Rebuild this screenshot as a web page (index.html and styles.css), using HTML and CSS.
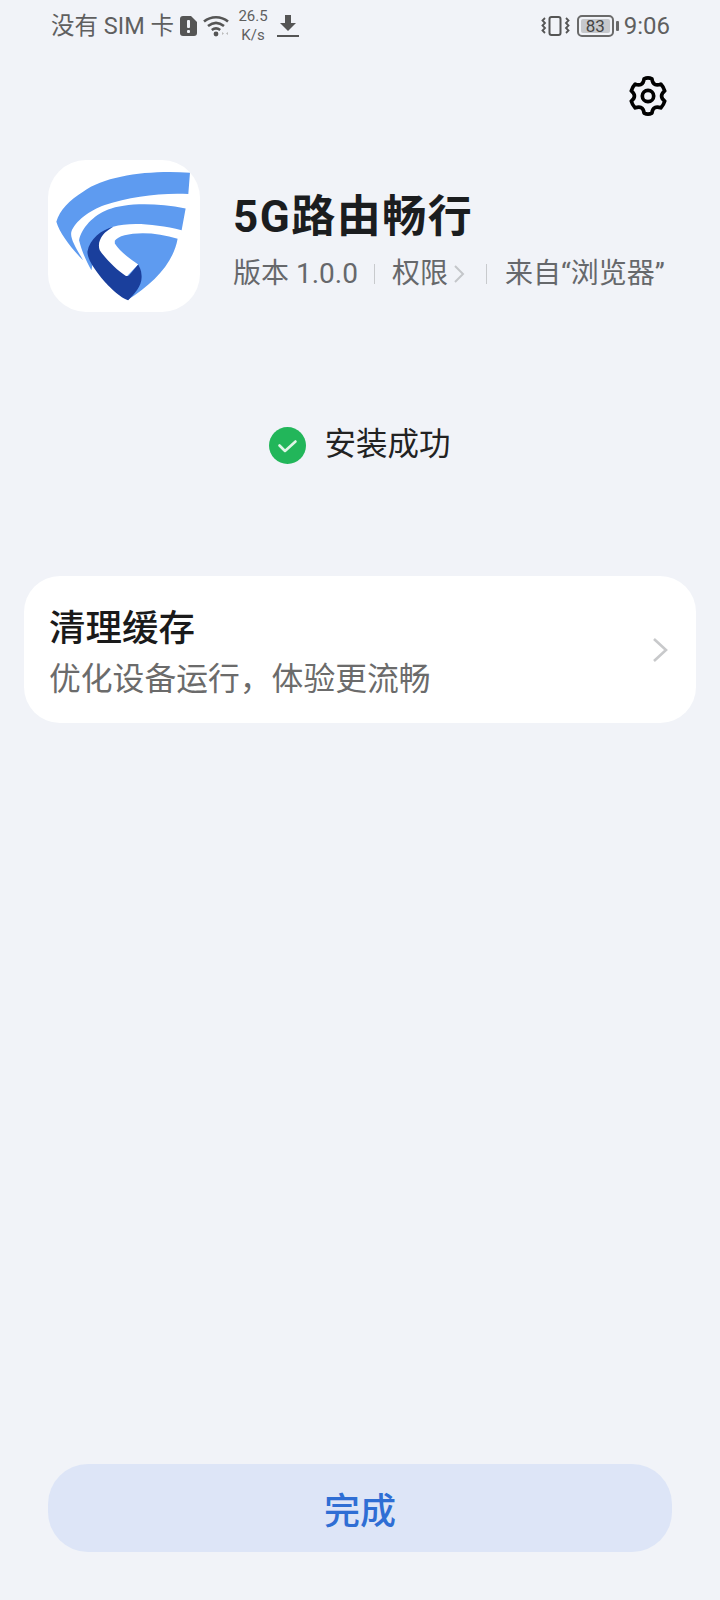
FILE: index.html
```html
<!DOCTYPE html>
<html lang="zh-CN">
<head>
<meta charset="utf-8">
<title>安装成功</title>
<link rel="stylesheet" href="styles.css">
</head>
<body>
<div class="page">
  <div class="status">
    <div class="status-left">
      <span class="carrier">没有 SIM 卡</span>
      <svg class="ic-sim" viewBox="0 0 17 20"><path d="M3 0h8l6 6v11a3 3 0 0 1-3 3H3a3 3 0 0 1-3-3V3a3 3 0 0 1 3-3z" fill="#555"/><rect x="7" y="4" width="3" height="8" rx="1" fill="#f1f3f8"/><rect x="7" y="14" width="3" height="3" rx="1" fill="#f1f3f8"/></svg>
      <svg class="ic-wifi" viewBox="0 0 26 22"><g fill="none" stroke="#555" stroke-width="2.6"><path d="M1 6.5C8 .8 18 .8 25 6.5"/><path d="M5 11C10 7 16 7 21 11"/><path d="M8.8 15c2.600-2 5.800-2 8.400 0"/></g><circle cx="13" cy="19" r="2.400" fill="#555"/><path d="M19 17l2 1.500-2 1.500zM25 17l-2 1.500 2 1.500z" fill="#bbb"/></svg>
      <span class="speed"><span>26.5</span><span>K/s</span></span>
      <svg class="ic-dl" viewBox="0 0 22 22"><path d="M8 0h6v8h5l-8 8-8-8h5z" fill="#555"/><rect y="20" width="22" height="2" fill="#555"/></svg>
    </div>
    <div class="status-right">
      <svg class="ic-vib" viewBox="0 0 29 20"><rect x="8.500" y="1" width="11" height="18" rx="2" fill="none" stroke="#555" stroke-width="2"/><path d="M4 2L1.500 4.500 4 7 1.500 9.500 4 12 1.500 14.500 4 17M25 2l2.500 2.500L25 7l2.500 2.500L25 12l2.500 2.500L25 17" fill="none" stroke="#555" stroke-width="1.800"/></svg>
      <span class="battery"><span class="battery-body"><span class="battery-level">83</span></span><span class="battery-nub"></span></span>
      <span class="time">9:06</span>
    </div>
  </div>

  <div class="toolbar">
    <svg class="ic-gear" viewBox="0 0 48 48"><path d="M19.500 4.500Q24 2.200 28.500 4.500Q29 9.500 31.750 10.600Q34.500 12 38.600 10.400Q42 14 43.100 18.150Q39.500 21 39.500 24Q39.500 27 43.100 29.850Q42 34 38.600 37.600Q34.500 36 31.750 37.400Q29 38.500 28.500 43.500Q24 45.800 19.500 43.500Q19 38.500 16.250 37.400Q13.500 36 9.400 37.600Q6 34 4.900 29.850Q8.500 27 8.500 24Q8.500 21 4.900 18.150Q6 14 9.400 10.400Q13.500 12 16.250 10.600Q19 9.500 19.500 4.500Z" fill="none" stroke="#000" stroke-width="4.200" stroke-linejoin="round"/><circle cx="24" cy="24" r="6.500" fill="none" stroke="#000" stroke-width="4.200"/></svg>
  </div>

  <div class="app">
    <div class="app-icon">
      <svg viewBox="25 30 455 455">
        <path d="M450 68C330 60 200 75 130 125C90 150 60 180 50 215C60 250 95 295 130 330C110 295 90 265 95 245C105 215 150 180 195 165C270 140 360 128 445 132Z" fill="#5e9bf0"/>
        <path d="M437 175C340 155 250 160 205 178C160 195 125 235 118 270C125 300 140 335 155 360L165 305L170 265L220 230C270 215 350 222 425 240Z" fill="#5e9bf0"/>
        <path d="M225 272C240 245 340 240 413 266C400 340 340 400 262 450L262 377L295 343C270 325 240 305 225 280Z" fill="#5e9bf0"/>
        <path d="M220 230C185 240 150 265 143 305C143 335 185 385 210 410C230 430 250 445 265 450C285 430 308 405 305 375C305 360 298 350 295 343L268 375Q262 380 255 375C235 362 200 330 180 300C170 275 190 245 220 230Z" fill="#1a3f9c"/>
      </svg>
    </div>
    <div class="app-info">
      <div class="app-name">5G路由畅行</div>
      <div class="app-meta">
        <span>版本 1.0.0</span>
        <i class="sep"></i>
        <span class="perm">权限<svg class="chev-sm" viewBox="0 0 12 20"><path d="M2 2l8 8-8 8" fill="none" stroke="#c4c6ca" stroke-width="2"/></svg></span>
        <i class="sep sep-wide"></i>
        <span>来自“浏览器”</span>
      </div>
    </div>
  </div>

  <div class="result">
    <svg class="ic-ok" viewBox="0 0 37 37"><circle cx="18.500" cy="18.500" r="18.500" fill="#22b65a"/><path d="M10.500 18.500l5.500 5.500 10.500-9.500" fill="none" stroke="#dff5e6" stroke-width="2.600" stroke-linecap="round" stroke-linejoin="round"/></svg>
    <span>安装成功</span>
  </div>

  <div class="card">
    <div class="card-text">
      <div class="card-title">清理缓存</div>
      <div class="card-desc">优化设备运行，体验更流畅</div>
    </div>
    <svg class="chev" viewBox="0 0 16 26"><path d="M2 2l12 11L2 24" fill="none" stroke="#c8c9cb" stroke-width="2.600"/></svg>
  </div>

  <button class="done">完成</button>
</div>
</body>
</html>
```
FILE: styles.css
```css
* { box-sizing: border-box; }
html, body { margin: 0; padding: 0; }
body {
  width: 720px;
  height: 1600px;
  background: #f1f3f8;
  font-family: Roboto, "Noto Sans CJK SC", sans-serif;
  overflow: hidden;
}
.page {
  height: 1600px;
  display: flex;
  flex-direction: column;
}
.status {
  height: 50px;
  padding: 2px 50px 0 51px;
  display: flex;
  justify-content: space-between;
  align-items: center;
  color: #5f5f5f;
}
.status-left, .status-right { display: flex; align-items: center; }
.carrier { font-size: 23.500px; line-height: 26px; }
.ic-sim { width: 17px; height: 20px; margin-left: 6px; }
.ic-wifi { width: 28px; height: 22px; margin-left: 5px; }
.speed {
  display: flex;
  flex-direction: column;
  align-items: center;
  font-size: 15px;
  line-height: 19px;
  margin-left: 7px;
  width: 32px;
}
.ic-dl { width: 22px; height: 22px; margin-left: 8px; }
.ic-vib { width: 29px; height: 20px; }
.battery { display: flex; align-items: center; margin-left: 7px; }
.battery-body {
  width: 37px;
  height: 22px;
  border: 2px solid #6a6a6a;
  border-radius: 5px;
  padding: 2px;
  display: flex;
}
.battery-level {
  flex: 1;
  background: #c6c8cc;
  border-radius: 2px;
  font-size: 17px;
  line-height: 14px;
  text-align: center;
  color: #444;
}
.battery-nub { width: 3px; height: 10px; margin-left: 2px; background: #6a6a6a; border-radius: 1px; }
.time { font-size: 24px; margin-left: 5px; line-height: 28px; }

.toolbar {
  height: 46px;
  padding-right: 51px;
  margin-top: 23px;
  display: flex;
  justify-content: flex-end;
  align-items: center;
}
.ic-gear { width: 42px; height: 42px; }

.app {
  display: flex;
  align-items: center;
  margin-top: 41px;
  padding-left: 48px;
}
.app-icon {
  width: 152px;
  height: 152px;
  background: #fff;
  border-radius: 38px;
  flex: none;
  overflow: hidden;
}
.app-icon svg { display: block; width: 152px; height: 152px; }
.app-info { margin-left: 33px; margin-top: 9px; }
.app-name {
  font-size: 44px;
  line-height: 54px;
  font-weight: 700;
  color: #1b1d1f;
  letter-spacing: 1.500px;
}
.app-meta {
  display: flex;
  align-items: center;
  font-size: 28px;
  line-height: 36px;
  color: #66686b;
  margin-top: 12px;
  white-space: nowrap;
}
.sep { width: 1px; height: 20px; background: #c8cacd; margin: 0 17px 0 16px; }
.sep-wide { margin-left: 21px; margin-right: 18px; }
.perm { display: flex; align-items: center; }
.chev-sm { width: 12px; height: 20px; margin-left: 5px; }

.result {
  display: flex;
  align-items: center;
  justify-content: center;
  margin-top: 113px;
  font-size: 31.500px;
  line-height: 40px;
  color: #222;
}
.ic-ok { width: 37px; height: 37px; margin-right: 18px; }

.card {
  margin: 111px 24px 0;
  height: 147px;
  background: #fff;
  border-radius: 36px;
  display: flex;
  align-items: center;
  justify-content: space-between;
  padding: 0 28px 0 25px;
}
.card-text { margin-top: 6px; }
.card-title { font-size: 36.500px; line-height: 46px; color: #1a1a1a; font-weight: 500; }
.card-desc { font-size: 31.800px; line-height: 42px; color: #6b6b6b; margin-top: 6px; }
.chev { width: 16px; height: 26px; }

.done {
  margin: auto 48px 48px;
  height: 88px;
  background: #dde5f7;
  border: 0;
  border-radius: 40px;
  font-family: inherit;
  font-size: 36px;
  font-weight: 500;
  color: #2f6ed4;
}
```
